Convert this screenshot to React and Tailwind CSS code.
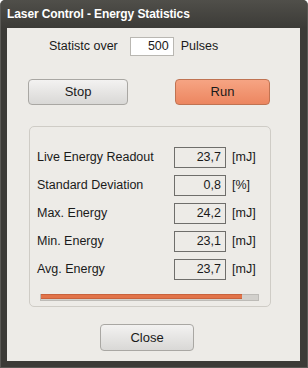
import React from 'react';

const rows = [
  { label: 'Live Energy Readout', value: '23,7', unit: '[mJ]' },
  { label: 'Standard Deviation', value: '0,8', unit: '[%]' },
  { label: 'Max. Energy', value: '24,2', unit: '[mJ]' },
  { label: 'Min. Energy', value: '23,1', unit: '[mJ]' },
  { label: 'Avg. Energy', value: '23,7', unit: '[mJ]' },
];

const GreyButton = ({ children, className }) => (
  <button
    className={`flex items-center justify-center rounded-[4px] border border-[#a9a7a3] bg-gradient-to-b from-[#f3f2f1] to-[#d9d8d6] text-[13px] text-[#1a1a1a] ${className}`}
  >
    {children}
  </button>
);

const App = () => {
  return (
    <div
      className="w-[308px] h-[368px] bg-white"
      style={{ fontFamily: '"Liberation Sans", Arial, sans-serif' }}
    >
      <div className="flex flex-col w-[308px] h-[368px] rounded-t-[5px] bg-[#3c3b37] border-l border-r border-b border-[#5a5955]">
        {/* Title bar */}
        <div className="h-[28px] flex items-center px-[6px] rounded-t-[5px] bg-gradient-to-b from-[#504f4a] to-[#3c3b37]">
          <span className="text-[12px] font-bold text-white tracking-[-0.1px]">
            Laser Control - Energy Statistics
          </span>
        </div>

        {/* Client area */}
        <div className="mx-[6px] w-[293px] h-[333px] bg-[#edebe7] flex flex-col text-[12.5px] text-[#1a1a1a]">
          {/* Pulses row */}
          <div className="flex items-center h-[19px] mt-[9px] pl-[42px]">
            <span>Statistc over</span>
            <div className="ml-[12px] w-[44px] h-[19px] bg-white border border-[#b9b7b2] flex items-center justify-end pr-[4px]">
              500
            </div>
            <span className="ml-[7px]">Pulses</span>
          </div>

          {/* Stop / Run */}
          <div className="flex mt-[23px] pl-[21px]">
            <GreyButton className="w-[100px] h-[26px]">Stop</GreyButton>
            <button className="ml-[47px] w-[95px] h-[26px] flex items-center justify-center rounded-[4px] border border-[#c07352] bg-gradient-to-b from-[#f6a483] to-[#ec8660] text-[13px] text-[#1a1a1a]">
              Run
            </button>
          </div>

          {/* Group box */}
          <div className="ml-[22px] mt-[21px] w-[242px] h-[181px] rounded-[5px] border border-[#cfccc6] flex flex-col pl-[7px] pt-[20px]">
            <div className="flex flex-col gap-[7px]">
              {rows.map((r) => (
                <div key={r.label} className="flex items-center h-[21px]">
                  <span className="w-[137px]">{r.label}</span>
                  <div className="w-[52px] h-[21px] border border-[#6f6e6b] flex items-center justify-end pr-[4px]">
                    {r.value}
                  </div>
                  <span className="ml-[6px]">{r.unit}</span>
                </div>
              ))}
            </div>
            <div className="mt-[14px] ml-[3px] w-[219px] h-[7px] bg-[#d2d0cc] border border-[#bdbbb7] flex">
              <div className="w-[201px] h-full bg-[#e2744a] border-y border-[#c9623c] -my-px" />
            </div>
          </div>

          {/* Close */}
          <div className="flex mt-[17px] pl-[93px]">
            <GreyButton className="w-[94px] h-[27px]">Close</GreyButton>
          </div>
        </div>
      </div>
    </div>
  );
};

export default App;
